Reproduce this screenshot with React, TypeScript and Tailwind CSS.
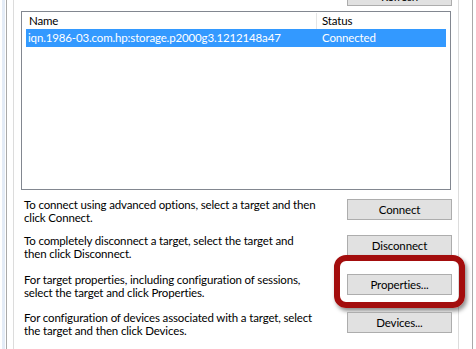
const rows = [
  {
    lines: ["To connect using advanced options, select a target and then", "click Connect."],
    button: "Connect",
    mt: "mt-[8px]",
  },
  {
    lines: ["To completely disconnect a target, select the target and", "then click Disconnect."],
    button: "Disconnect",
    mt: "mt-[10px]",
  },
  {
    lines: ["For target properties, including configuration of sessions,", "select the target and click Properties."],
    button: "Properties...",
    mt: "mt-[13px]",
    highlight: true,
  },
  {
    lines: ["For configuration of devices associated with a target, select", "the target and then click Devices."],
    button: "Devices...",
    mt: "mt-[12px]",
  },
];

function WinButton({ label }: { label: string }) {
  return (
    <button
      type="button"
      className="h-[21px] w-[105px] border border-[#adadad] bg-[#e1e1e1] text-[11.5px] leading-none tracking-[-0.15px] text-black"
    >
      {label}
    </button>
  );
}

export default function App() {
  return (
    <div
      className="flex h-[349px] w-[476px] overflow-hidden bg-white text-[11.5px] tracking-[-0.15px] text-black"
      style={{ fontFamily: '"Segoe UI", Lato, "Noto Sans", sans-serif' }}
    >
      {/* outer window frame */}
      <div className="ml-[2px] h-full w-[3px] shrink-0 bg-[#e4ecf7]" />
      <div className="ml-[1px] flex h-full w-[467px] shrink-0 border-x border-[#a9a9a9] pl-[6px] pr-[13px]">
        {/* group box */}
        <div className="flex h-full flex-1 flex-col border-x border-[#dcdcdc] px-[7px]">
          {/* Refresh button, mostly scrolled out */}
          <div className="mt-[-17px] flex shrink-0 justify-end">
            <button
              type="button"
              className="mr-[-1px] h-[23px] w-[105px] border border-[#adadad] bg-[#e1e1e1] pt-[5px] text-[11.5px] leading-none text-black"
            >
              Refresh
            </button>
          </div>

          {/* target list */}
          <div className="mt-[5px] h-[179px] shrink-0 border border-[#828790] bg-white px-[4px] pt-[1px]">
            <div className="flex h-[16px] items-center whitespace-nowrap">
              <div className="w-[290px] pl-[3px]">Name</div>
              <div className="h-full border-l border-[#e5e5e5] pl-[5px] leading-[16px]">Status</div>
            </div>
            <div className="flex h-[18px] items-center whitespace-nowrap bg-[#3399ff] text-white">
              <div className="w-[290px] pl-[2px]">iqn.1986-03.com.hp:storage.p2000g3.1212148a47</div>
              <div className="pl-[6px]">Connected</div>
            </div>
          </div>

          {rows.map((row) => (
            <div key={row.button} className={`${row.mt} flex shrink-0 items-start justify-between pl-[3px]`}>
              <p className="whitespace-nowrap leading-[13px]">
                {row.lines[0]}
                <br />
                {row.lines[1]}
              </p>
              <div className="relative mr-[-1px] mt-[1px]">
                {row.highlight && (
                  <div className="absolute left-[-13px] top-[-19px] h-[53px] w-[131px] rounded-[12px] border-[6px] border-[#a30d0d] shadow-[2px_3px_4px_rgba(0,0,0,0.45)]" />
                )}
                <WinButton label={row.button} />
              </div>
            </div>
          ))}
        </div>
      </div>
    </div>
  );
}
